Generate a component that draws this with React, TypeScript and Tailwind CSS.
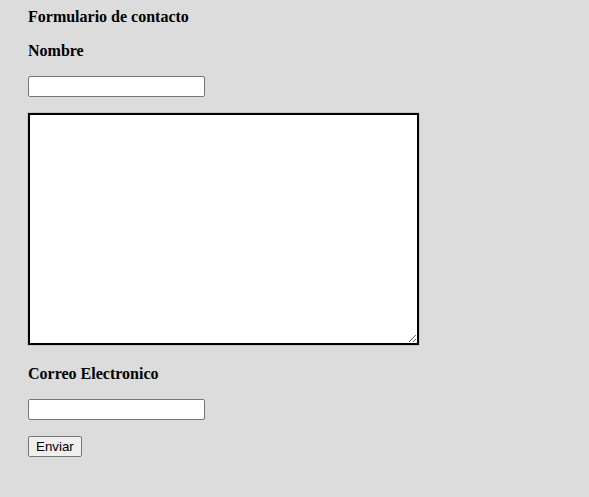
import React from "react"

export default function App() {
  return (
    <div className="min-h-[497px] w-full bg-[#dcdcdc] px-[28px] pt-[8px] font-['Liberation_Serif',serif] text-[16px] text-black">
      <form className="flex flex-col items-start" onSubmit={(e) => e.preventDefault()}>
        <h3 className="font-bold leading-[18px]">Formulario de contacto</h3>
        <label className="mt-[16px] font-bold leading-[18px]">Nombre</label>
        <input
          type="text"
          className="mt-[16px] h-[21px] w-[177px] rounded-[2px] border border-[#767676] bg-white px-[2px] text-[13px]"
        />
        <textarea className="mt-[16px] h-[232px] w-[391px] resize border-2 border-black bg-white outline outline-1 outline-[#c8c8c8]" />
        <label className="mt-[20px] font-bold leading-[18px]">Correo Electronico</label>
        <input
          type="email"
          className="mt-[16px] h-[21px] w-[177px] rounded-[2px] border border-[#767676] bg-white px-[2px] text-[13px]"
        />
        <button
          type="submit"
          className="mt-[16px] h-[21px] rounded-[2px] border border-[#767676] bg-[#efefef] px-[7px] font-['Liberation_Sans',sans-serif] text-[13.33px] leading-none"
        >
          Enviar
        </button>
      </form>
    </div>
  )
}
